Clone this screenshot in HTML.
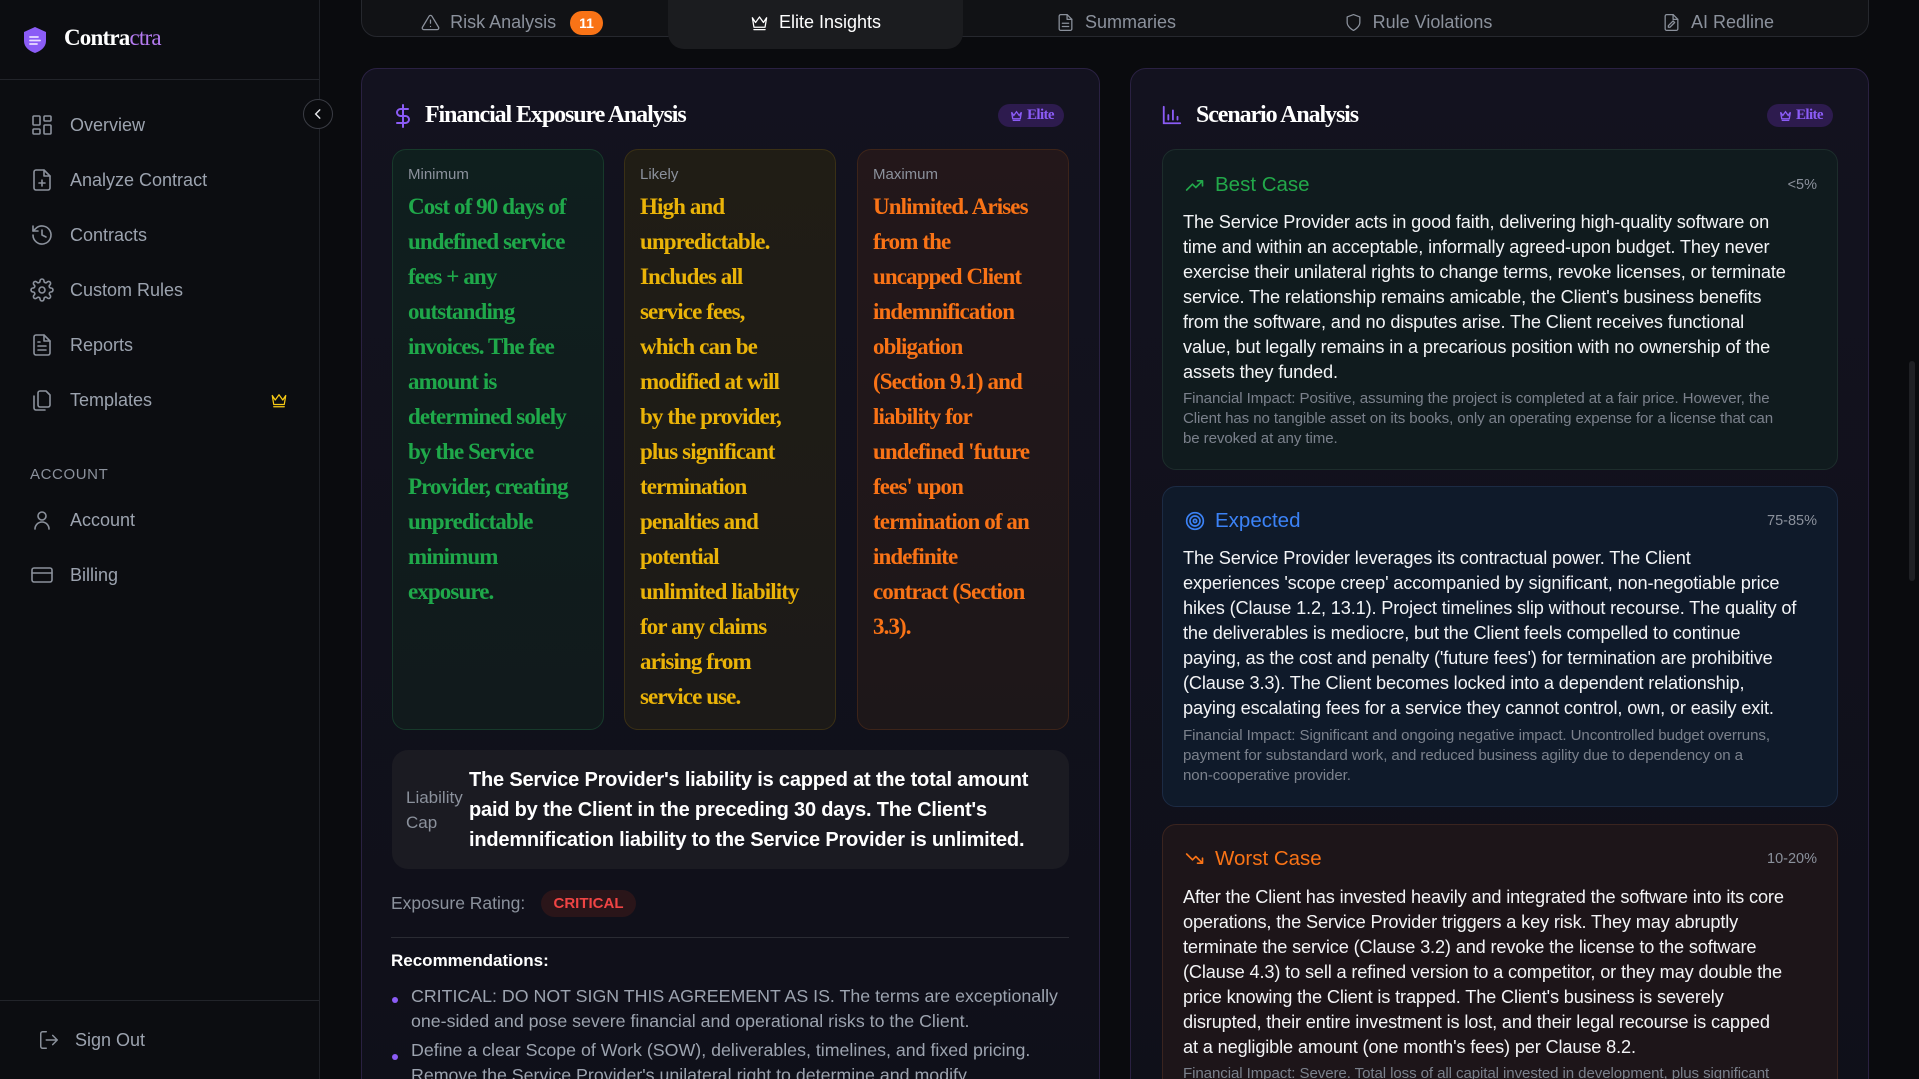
<!DOCTYPE html>
<html><head><meta charset="utf-8"><style>
*{margin:0;padding:0;box-sizing:border-box}
html,body{width:1919px;height:1079px;overflow:hidden}
body{background:#0a0b0e;font-family:"Liberation Sans",sans-serif;color:#e5e7eb;position:relative}
#wrap{position:absolute;left:0;top:0;width:1919px;height:1079px;overflow:hidden}
.abs{position:absolute}
.side{left:0;top:0;width:320px;height:1079px;background:#0c0d11;border-right:1px solid #1f2127}
.nav{position:absolute;left:0;width:319px;height:40px;display:flex;align-items:center;color:#9ca3af;font-size:18px}
.nav svg{position:absolute;left:30px;width:24px;height:24px;fill:none;stroke:#8b919c;stroke-width:1.6;stroke-linecap:round;stroke-linejoin:round}
.nav span{position:absolute;left:70px}
.serif{font-family:"Liberation Serif",serif;font-weight:bold}
.card{border:1px solid #2a2142;border-radius:16px;background:linear-gradient(180deg,#13121f,#0f1019)}
.badge{position:absolute;height:23px;border-radius:12px;background:#2d1b4e;color:#8b5cf6;font-family:"Liberation Serif",serif;font-weight:bold;font-size:15px;letter-spacing:-0.6px;display:flex;align-items:center;padding:0 10px 0 12px;gap:4px}
.sub{position:absolute;top:149px;width:212px;height:581px;border-radius:14px}
.sub .lab{position:absolute;left:15px;top:16px;font-size:15px;color:#8b919c}
.sub .big{position:absolute;left:15px;top:39px;font-family:"Liberation Serif",serif;font-weight:bold;font-size:23px;line-height:35px;letter-spacing:-0.9px;white-space:nowrap}
.sc{position:absolute;left:1162px;width:676px;border-radius:14px}
.sc .hd{position:absolute;left:22px;font-size:20.5px;display:flex;align-items:center;gap:10px;height:26px}
.sc .pc{position:absolute;right:20px;font-size:14.5px;color:#8b919c}
.sc .bd{position:absolute;left:20px;font-size:18.2px;line-height:25px;color:#f3f4f6;white-space:nowrap;letter-spacing:-0.15px}
.sc .fi{position:absolute;left:20px;font-size:15.1px;line-height:20px;color:#7b818c;white-space:nowrap;letter-spacing:-0.1px}
.tab{position:absolute;top:0;height:45px;display:flex;align-items:center;justify-content:center;gap:10px;color:#8b919c;font-size:18px}
.tab svg{width:19px;height:19px;fill:none;stroke:currentColor;stroke-width:1.6;stroke-linecap:round;stroke-linejoin:round}
</style></head><body><div id="wrap">

<div class="abs side">
  <div class="abs" style="left:0;top:79px;width:319px;height:1px;background:#22242a"></div>
  <svg class="abs" style="left:22px;top:26px" width="26" height="28" viewBox="0 0 26 28"><path d="M13 1 L24 6 V15 C24 21 19 25 13 27 C7 25 2 21 2 15 V6 Z" fill="#8b5cf6"/><path d="M8 11h8M8 14.5h10M8 18h7" stroke="#e9ddff" stroke-width="1.8" stroke-linecap="round"/></svg>
  <div class="abs serif" style="left:64px;top:25px;font-size:23px;letter-spacing:-0.8px;color:#fff">Contra<span style="color:#b57bf0;font-weight:normal">ctra</span></div>

  <div class="nav" style="top:105px"><svg viewBox="0 0 24 24"><rect x="3" y="3" width="7" height="9" rx="1"/><rect x="14" y="3" width="7" height="5" rx="1"/><rect x="14" y="12" width="7" height="9" rx="1"/><rect x="3" y="16" width="7" height="5" rx="1"/></svg><span>Overview</span></div>
  <div class="nav" style="top:160px"><svg viewBox="0 0 24 24"><path d="M14 2H6a2 2 0 0 0-2 2v16a2 2 0 0 0 2 2h12a2 2 0 0 0 2-2V8z"/><path d="M14 2v6h6M12 12v6M9 15h6"/></svg><span>Analyze Contract</span></div>
  <div class="nav" style="top:215px"><svg viewBox="0 0 24 24"><path d="M3 12a9 9 0 1 0 3-6.7L3 8"/><path d="M3 3v5h5M12 7v5l4 2"/></svg><span>Contracts</span></div>
  <div class="nav" style="top:270px"><svg viewBox="0 0 24 24"><circle cx="12" cy="12" r="3"/><path d="M19.4 15a1.7 1.7 0 0 0 .3 1.8l.1.1a2 2 0 1 1-2.8 2.8l-.1-.1a1.7 1.7 0 0 0-2.9 1.2V21a2 2 0 1 1-4 0v-.1a1.7 1.7 0 0 0-2.9-1.2l-.1.1a2 2 0 1 1-2.8-2.8l.1-.1A1.7 1.7 0 0 0 3.1 14H3a2 2 0 1 1 0-4h.1a1.7 1.7 0 0 0 1.2-2.9l-.1-.1a2 2 0 1 1 2.8-2.8l.1.1A1.7 1.7 0 0 0 10 3.1V3a2 2 0 1 1 4 0v.1a1.7 1.7 0 0 0 2.9 1.2l.1-.1a2 2 0 1 1 2.8 2.8l-.1.1A1.7 1.7 0 0 0 20.9 10H21a2 2 0 1 1 0 4h-.1a1.7 1.7 0 0 0-1.5 1z"/></svg><span>Custom Rules</span></div>
  <div class="nav" style="top:325px"><svg viewBox="0 0 24 24"><path d="M14 2H6a2 2 0 0 0-2 2v16a2 2 0 0 0 2 2h12a2 2 0 0 0 2-2V8z"/><path d="M14 2v6h6M8 13h8M8 17h8M8 9h2"/></svg><span>Reports</span></div>
  <div class="nav" style="top:380px"><svg viewBox="0 0 24 24"><path d="M8 17V5a2 2 0 0 1 2-2h6l4 4v10a2 2 0 0 1-2 2H10a2 2 0 0 1-2-2z"/><path d="M4 8v12a2 2 0 0 0 2 2h9"/></svg><span>Templates</span>
    <svg viewBox="0 0 24 24" style="left:270px;width:18px;height:18px;stroke:#facc15"><path d="M3 6l4 6 5-7 5 7 4-6-2 12H5z"/><path d="M5 21h14"/></svg></div>

  <div class="abs" style="left:30px;top:466px;font-size:15px;color:#8b919c;letter-spacing:0.6px">ACCOUNT</div>
  <div class="nav" style="top:500px"><svg viewBox="0 0 24 24"><circle cx="12" cy="8" r="4"/><path d="M5 21a7 7 0 0 1 14 0"/></svg><span>Account</span></div>
  <div class="nav" style="top:555px"><svg viewBox="0 0 24 24"><rect x="2" y="5" width="20" height="14" rx="2"/><path d="M2 10h20"/></svg><span>Billing</span></div>

  <div class="abs" style="left:0;top:1000px;width:319px;height:1px;background:#22242a"></div>
  <div class="nav" style="top:1020px"><svg viewBox="0 0 24 24" style="left:38px;width:22px"><path d="M9 21H5a2 2 0 0 1-2-2V5a2 2 0 0 1 2-2h4M16 17l5-5-5-5M21 12H9"/></svg><span style="left:75px">Sign Out</span></div>
</div>
<div class="abs" style="left:303px;top:99px;width:30px;height:30px;border-radius:50%;border:1px solid #3a3c44;background:#0a0b0e;display:flex;align-items:center;justify-content:center"><svg width="14" height="14" viewBox="0 0 24 24" fill="none" stroke="#e5e7eb" stroke-width="2.5" stroke-linecap="round"><path d="M15 5l-7 7 7 7"/></svg></div>

<!-- tabs -->
<div class="abs" style="left:361px;top:-10px;width:1508px;height:47px;background:#111215;border:1px solid #26282e;border-radius:0 0 16px 16px"></div>
<div class="abs" style="left:668px;top:-10px;width:295px;height:59px;background:#1b1c1f;border-radius:0 0 16px 16px"></div>
<div class="tab" style="left:361px;width:302px"><svg viewBox="0 0 24 24"><path d="M10.3 3.9L1.8 18a2 2 0 0 0 1.7 3h17a2 2 0 0 0 1.7-3L13.7 3.9a2 2 0 0 0-3.4 0zM12 9v4M12 17h.01"/></svg>Risk Analysis<span style="background:#f97316;color:#fff;font-weight:bold;font-size:14px;border-radius:12px;padding:4px 9px;margin-left:4px">11</span></div>
<div class="tab" style="left:668px;width:295px;color:#fff"><svg viewBox="0 0 24 24"><path d="M3 6l4 6 5-7 5 7 4-6-2 12H5z"/><path d="M5 21h14"/></svg>Elite Insights</div>
<div class="tab" style="left:965px;width:302px"><svg viewBox="0 0 24 24"><path d="M14 2H6a2 2 0 0 0-2 2v16a2 2 0 0 0 2 2h12a2 2 0 0 0 2-2V8z"/><path d="M14 2v6h6M8 13h8M8 17h8"/></svg>Summaries</div>
<div class="tab" style="left:1267px;width:302px"><svg viewBox="0 0 24 24"><path d="M12 22s8-4 8-10V5l-8-3-8 3v7c0 6 8 10 8 10z"/></svg>Rule Violations</div>
<div class="tab" style="left:1567px;width:302px"><svg viewBox="0 0 24 24"><path d="M14 2H6a2 2 0 0 0-2 2v16a2 2 0 0 0 2 2h12a2 2 0 0 0 2-2V8z"/><path d="M14 2v6h6M10 18l6-6-2-2-6 6v2z"/></svg>AI Redline</div>

<!-- left card -->
<div class="abs card" style="left:361px;top:68px;width:739px;height:1060px"></div>
<svg class="abs" style="left:394px;top:104px" width="18" height="24" viewBox="0 0 18 24" fill="none" stroke="#8b5cf6" stroke-width="2" stroke-linecap="round"><path d="M9 1v22M14 5H6.5a3.5 3.5 0 0 0 0 7h5a3.5 3.5 0 0 1 0 7H3"/></svg>
<div class="abs serif" style="left:425px;top:102px;font-size:24px;letter-spacing:-1.1px;color:#fff">Financial Exposure Analysis</div>
<div class="badge" style="left:998px;top:104px"><svg width="13" height="13" viewBox="0 0 24 24" fill="none" stroke="#8b5cf6" stroke-width="2.4"><path d="M3 6l4 6 5-7 5 7 4-6-2 12H5z"/><path d="M5 21h14"/></svg>Elite</div>

<div class="sub" style="left:392px;background:linear-gradient(180deg,#0f1f1e,#111a1c);border:1px solid #173a2b">
 <div class="lab">Minimum</div>
 <div class="big" style="color:#1fa84a">Cost of 90 days of<br>undefined service<br>fees + any<br>outstanding<br>invoices. The fee<br>amount is<br>determined solely<br>by the Service<br>Provider, creating<br>unpredictable<br>minimum<br>exposure.</div>
</div>
<div class="sub" style="left:624px;background:linear-gradient(180deg,#201d15,#1c1a18);border:1px solid #3a3015">
 <div class="lab">Likely</div>
 <div class="big" style="color:#eab308">High and<br>unpredictable.<br>Includes all<br>service fees,<br>which can be<br>modified at will<br>by the provider,<br>plus significant<br>termination<br>penalties and<br>potential<br>unlimited liability<br>for any claims<br>arising from<br>service use.</div>
</div>
<div class="sub" style="left:857px;background:linear-gradient(180deg,#23171a,#1d1719);border:1px solid #3d2419">
 <div class="lab">Maximum</div>
 <div class="big" style="color:#f97316">Unlimited. Arises<br>from the<br>uncapped Client<br>indemnification<br>obligation<br>(Section 9.1) and<br>liability for<br>undefined 'future<br>fees' upon<br>termination of an<br>indefinite<br>contract (Section<br>3.3).</div>
</div>

<div class="abs" style="left:392px;top:750px;width:677px;height:119px;background:#1b1b22;border-radius:16px"></div>
<div class="abs" style="left:406px;top:785px;font-size:17px;line-height:25px;color:#8b919c">Liability<br>Cap</div>
<div class="abs" style="left:469px;top:765px;font-size:20px;font-weight:bold;line-height:30px;color:#fff;white-space:nowrap;letter-spacing:-0.2px">The Service Provider's liability is capped at the total amount<br>paid by the Client in the preceding 30 days. The Client's<br>indemnification liability to the Service Provider is unlimited.</div>

<div class="abs" style="left:391px;top:893px;font-size:17.5px;color:#8b919c">Exposure Rating:</div>
<div class="abs" style="left:541px;top:890px;height:27px;width:95px;border-radius:14px;background:#2a1519;color:#ef4444;font-weight:bold;font-size:15px;display:flex;align-items:center;justify-content:center">CRITICAL</div>
<div class="abs" style="left:391px;top:937px;width:678px;height:1px;background:#2a2b33"></div>
<div class="abs" style="left:391px;top:951px;font-size:17px;font-weight:bold;color:#fff">Recommendations:</div>
<div class="abs" style="left:392px;top:997px;width:6px;height:6px;border-radius:50%;background:#8b5cf6"></div>
<div class="abs" style="left:392px;top:1054px;width:6px;height:6px;border-radius:50%;background:#8b5cf6"></div>
<div class="abs" style="left:411px;top:984px;font-size:17.8px;line-height:25px;color:#9ca3af;white-space:nowrap">CRITICAL: DO NOT SIGN THIS AGREEMENT AS IS. The terms are exceptionally<br>one-sided and pose severe financial and operational risks to the Client.</div>
<div class="abs" style="left:411px;top:1038px;font-size:17.8px;line-height:25px;color:#9ca3af;white-space:nowrap">Define a clear Scope of Work (SOW), deliverables, timelines, and fixed pricing.<br>Remove the Service Provider's unilateral right to determine and modify</div>

<!-- right card -->
<div class="abs card" style="left:1130px;top:68px;width:739px;height:1060px"></div>
<svg class="abs" style="left:1161px;top:104px" width="22" height="22" viewBox="0 0 24 24" fill="none" stroke="#8b5cf6" stroke-width="2" stroke-linecap="round"><path d="M3 3v18h18M8 17v-5M13 17V7M18 17v-3"/></svg>
<div class="abs serif" style="left:1196px;top:102px;font-size:24px;letter-spacing:-1.1px;color:#fff">Scenario Analysis</div>
<div class="badge" style="left:1767px;top:104px"><svg width="13" height="13" viewBox="0 0 24 24" fill="none" stroke="#8b5cf6" stroke-width="2.4"><path d="M3 6l4 6 5-7 5 7 4-6-2 12H5z"/><path d="M5 21h14"/></svg>Elite</div>

<div class="sc" style="top:149px;height:321px;background:#101b1e;border:1px solid #1d2d2c">
 <div class="hd" style="top:22px;color:#22a84a"><svg width="20" height="20" viewBox="0 0 24 24" fill="none" stroke="#22a84a" stroke-width="2" stroke-linecap="round" stroke-linejoin="round"><path d="M2 18l7-7 4 4 8-8M15 7h6v6"/></svg>Best Case</div>
 <div class="pc" style="top:27px">&lt;5%</div>
 <div class="bd" style="top:60px">The Service Provider acts in good faith, delivering high-quality software on<br>time and within an acceptable, informally agreed-upon budget. They never<br>exercise their unilateral rights to change terms, revoke licenses, or terminate<br>service. The relationship remains amicable, the Client's business benefits<br>from the software, and no disputes arise. The Client receives functional<br>value, but legally remains in a precarious position with no ownership of the<br>assets they funded.</div>
 <div class="fi" style="top:239px">Financial Impact: Positive, assuming the project is completed at a fair price. However, the<br>Client has no tangible asset on its books, only an operating expense for a license that can<br>be revoked at any time.</div>
</div>

<div class="sc" style="top:486px;height:321px;background:#0f1a2a;border:1px solid #1c2b44">
 <div class="hd" style="top:21px;color:#3b82f6"><svg width="20" height="20" viewBox="0 0 24 24" fill="none" stroke="#3b82f6" stroke-width="2"><circle cx="12" cy="12" r="10"/><circle cx="12" cy="12" r="6"/><circle cx="12" cy="12" r="2"/></svg>Expected</div>
 <div class="pc" style="top:26px">75-85%</div>
 <div class="bd" style="top:59px">The Service Provider leverages its contractual power. The Client<br>experiences 'scope creep' accompanied by significant, non-negotiable price<br>hikes (Clause 1.2, 13.1). Project timelines slip without recourse. The quality of<br>the deliverables is mediocre, but the Client feels compelled to continue<br>paying, as the cost and penalty ('future fees') for termination are prohibitive<br>(Clause 3.3). The Client becomes locked into a dependent relationship,<br>paying escalating fees for a service they cannot control, own, or easily exit.</div>
 <div class="fi" style="top:239px">Financial Impact: Significant and ongoing negative impact. Uncontrolled budget overruns,<br>payment for substandard work, and reduced business agility due to dependency on a<br>non-cooperative provider.</div>
</div>

<div class="sc" style="top:824px;height:300px;background:#1d1519;border:1px solid #3a241f">
 <div class="hd" style="top:21px;color:#f97316"><svg width="20" height="20" viewBox="0 0 24 24" fill="none" stroke="#f97316" stroke-width="2" stroke-linecap="round" stroke-linejoin="round"><path d="M2 6l7 7 4-4 8 8M15 17h6v-6"/></svg>Worst Case</div>
 <div class="pc" style="top:26px">10-20%</div>
 <div class="bd" style="top:60px">After the Client has invested heavily and integrated the software into its core<br>operations, the Service Provider triggers a key risk. They may abruptly<br>terminate the service (Clause 3.2) and revoke the license to the software<br>(Clause 4.3) to sell a refined version to a competitor, or they may double the<br>price knowing the Client is trapped. The Client's business is severely<br>disrupted, their entire investment is lost, and their legal recourse is capped<br>at a negligible amount (one month's fees) per Clause 8.2.</div>
 <div class="fi" style="top:239px">Financial Impact: Severe. Total loss of all capital invested in development, plus significant</div>
</div>

<div class="abs" style="left:1909px;top:361px;width:6px;height:220px;border-radius:3px;background:#1f2024"></div>
</div></body></html>
